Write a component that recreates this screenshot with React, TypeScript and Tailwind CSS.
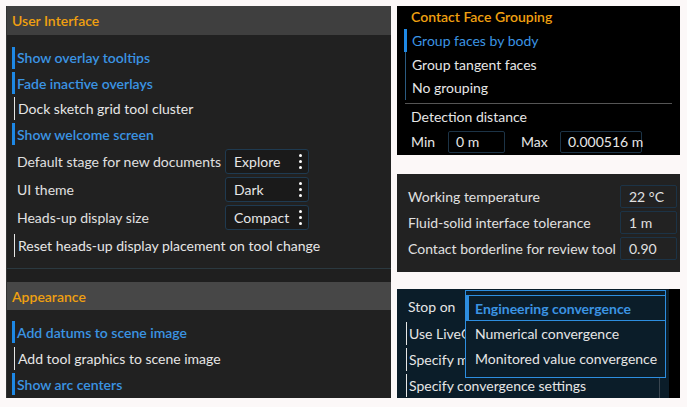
import React from "react";

const font = { fontFamily: '"Lato", "Noto Sans", sans-serif' };

function Toggle({ label, on, h = "h-[25.5px]" }: { label: string; on?: boolean; h?: string }) {
  return (
    <div className={`flex items-center pl-[5px] ${h}`}>
      <div className={on ? "h-[22px] w-[3px] bg-[#1e88e5]" : "ml-[2px] mr-[1px] h-[23px] w-px bg-[#e6e6e6]"} />
      <span className={`ml-[2px] ${on ? "font-semibold text-[#3b94e3]" : "text-[#e6e6e6]"}`}>{label}</span>
    </div>
  );
}

function Select({ label, value }: { label: string; value: string }) {
  return (
    <div className="flex h-[28px] items-center pl-[10px]">
      <span className="w-[208px] text-[#e0e0e0]">{label}</span>
      <div className="flex h-[25px] w-[84px] items-center justify-between rounded-[3px] border border-[#1f3a50] bg-[#1a1a1a] pl-[8px] pr-[6px] text-[#e6e6e6]">
        <span>{value}</span>
        <span className="flex flex-col gap-[3px]">
          <span className="h-[3px] w-[3px] rounded-full bg-white" />
          <span className="h-[3px] w-[3px] rounded-full bg-white" />
          <span className="h-[3px] w-[3px] rounded-full bg-white" />
        </span>
      </div>
    </div>
  );
}

function Field({ value, w }: { value: string; w: string }) {
  return (
    <div className={`flex h-[22px] items-center whitespace-nowrap rounded-[2px] border border-[#1c3346] px-[7px] text-[#e6e6e6] ${w}`}>
      {value}
    </div>
  );
}

export default function App() {
  return (
    <div className="flex h-[407px] w-[687px] gap-[6px] bg-[#fcf8f8] p-[6px] text-[14px]" style={font}>
      {/* left settings panel */}
      <div className="flex h-[392px] w-[385px] flex-col border-l border-[#333] bg-[#212121]">
        <div className="flex h-[29px] items-center bg-[#3f3f3f] pl-[5px] font-semibold text-[#f0a010]">User Interface</div>
        <div className="border-b border-[#2b3940] pt-[10px] pb-[10px]">
          <Toggle label="Show overlay tooltips" on />
          <Toggle label="Fade inactive overlays" on />
          <Toggle label="Dock sketch grid tool cluster" />
          <Toggle label="Show welcome screen" on />
          <Select label="Default stage for new documents" value="Explore" />
          <Select label="UI theme" value="Dark" />
          <Select label="Heads-up display size" value="Compact" />
          <div className="mt-[1px]">
            <Toggle label="Reset heads-up display placement on tool change" h="h-[26px]" />
          </div>
        </div>
        <div className="h-[13px] bg-[#1f1f1f]" />
        <div className="flex h-[28px] items-center bg-[#474747] pl-[5px] font-semibold text-[#f0a010]">Appearance</div>
        <div className="pt-[9px]">
          <Toggle label="Add datums to scene image" on h="h-[26px]" />
          <Toggle label="Add tool graphics to scene image" h="h-[26px]" />
          <Toggle label="Show arc centers" on h="h-[26px]" />
        </div>
      </div>

      {/* right column */}
      <div className="flex w-[283px] flex-col">
        <div className="h-[149px] bg-black pr-[8px]">
          <div className="flex h-[21px] items-center pl-[14px] font-semibold text-[#f0a010]">Contact Face Grouping</div>
          <div className="ml-[8px] mt-[2px] border-l border-[#2a5a80]">
            <div className="flex h-[23.5px] items-center">
              <div className="-ml-[2px] h-[23px] w-[3px] bg-[#1e88e5]" />
              <span className="ml-[5px] text-[#3b94e3]">Group faces by body</span>
            </div>
            <div className="flex h-[23.5px] items-center pl-[6px] text-[#e6e6e6]">Group tangent faces</div>
            <div className="flex h-[23.5px] items-center pl-[6px] text-[#e6e6e6]">No grouping</div>
          </div>
          <div className="ml-[8px] mt-[3px] h-px bg-[#555]" />
          <div className="flex h-[26px] items-center pl-[14px] text-[#e6e6e6]">Detection distance</div>
          <div className="flex h-[24px] items-center pl-[14px] text-[#e6e6e6]">
            <span className="w-[37px]">Min</span>
            <Field value="0 m" w="w-[57px]" />
            <span className="ml-[16px] w-[39px]">Max</span>
            <Field value="0.000516 m" w="w-[82px]" />
          </div>
        </div>

        <div className="mt-[19px] flex h-[98px] flex-col gap-[3px] bg-[#222] pt-[11px] pl-[11px] text-[#e0e0e0]">
          {[
            ["Working temperature", "22 °C"],
            ["Fluid-solid interface tolerance", "1 m"],
            ["Contact borderline for review tool", "0.90"],
          ].map(([l, v]) => (
            <div key={l} className="flex h-[23px] items-center justify-between pr-[3px]">
              <span>{l}</span>
              <div className="flex h-[23px] w-[57px] items-center rounded-[2px] border border-[#1c3346] px-[8px]">{v}</div>
            </div>
          ))}
        </div>

        <div className="relative mt-[17px] flex h-[109px] bg-black">
          <div className="w-[272px] bg-[#0b1d29] text-[#e6e6e6]">
            <div className="flex h-[31px] items-center pl-[11px] pt-[4px]">Stop on</div>
            <div className="mr-[9px] border-r border-[#3a4650]">
              {["Use LiveGPU", "Specify maximum iterations", "Specify convergence settings"].map((t) => (
                <div key={t} className="flex h-[26px] items-center pl-[9px]">
                  <div className="mr-[2px] h-[23px] w-px shrink-0 bg-[#e6e6e6]" />
                  <span className="whitespace-nowrap">{t}</span>
                </div>
              ))}
            </div>
          </div>
          {/* open dropdown list over the rows */}
          <div className="absolute left-[68px] top-[1px] w-[201px] border border-[#2d8ee0] bg-[#0b1d29] pt-[4px] pb-[6px]">
            <div className="flex h-[26px] items-center border-y border-[#2d8ee0]">
              <div className="h-[24px] w-[3px] bg-[#2d8ee0]" />
              <span className="ml-[6px] font-bold text-[#3b94e3]">Engineering convergence</span>
            </div>
            <div className="flex h-[25px] items-center pl-[9px] text-[#e6e6e6]">Numerical convergence</div>
            <div className="flex h-[25px] items-center pl-[9px] text-[#e6e6e6]">Monitored value convergence</div>
          </div>
        </div>
      </div>
    </div>
  );
}
